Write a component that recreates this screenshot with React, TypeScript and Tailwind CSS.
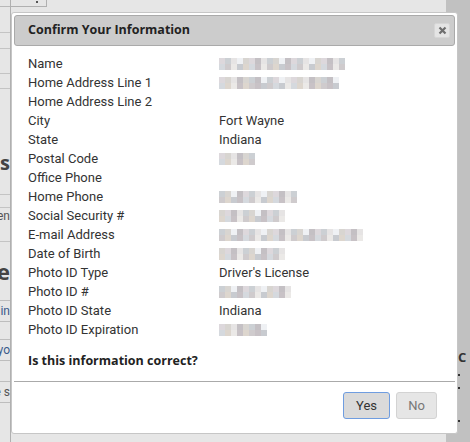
import React from 'react';

const palette = [
  'bg-[#ddd8dc]', 'bg-[#cfcbcd]', 'bg-[#e6e4e4]', 'bg-[#c8cbd0]', 'bg-[#d8d5d1]', 'bg-[#d5d9de]',
  'bg-[#c4c0c4]', 'bg-[#ebe9e7]', 'bg-[#ccd0d4]', 'bg-[#ddd6ce]', 'bg-[#eff1f4]', 'bg-[#c8c2c6]',
];

// pixelated stand-in for the blurred personal values
const Pix = ({ width, seed }: { width: number; seed: number }) => {
  const cols = Math.round(width / 6);
  return (
    <div className="flex flex-col h-[12px] w-fit">
      {[0, 1].map((r) => (
        <div key={r} className="flex h-[6px]">
          {Array.from({ length: cols }).map((_, i) => (
            <div key={i} className={`w-[6px] h-[6px] ${palette[(i * 7 + r * 5 + seed * 3 + ((i * i + seed) % 4)) % palette.length]}`} />
          ))}
        </div>
      ))}
    </div>
  );
};

const rows: { label: string; value?: string; pix?: number }[] = [
  { label: 'Name', pix: 126 },
  { label: 'Home Address Line 1', pix: 120 },
  { label: 'Home Address Line 2' },
  { label: 'City', value: 'Fort Wayne' },
  { label: 'State', value: 'Indiana' },
  { label: 'Postal Code', pix: 36 },
  { label: 'Office Phone' },
  { label: 'Home Phone', pix: 78 },
  { label: 'Social Security #', pix: 66 },
  { label: 'E-mail Address', pix: 144 },
  { label: 'Date of Birth', pix: 66 },
  { label: 'Photo ID Type', value: "Driver's License" },
  { label: 'Photo ID #', pix: 72 },
  { label: 'Photo ID State', value: 'Indiana' },
  { label: 'Photo ID Expiration', pix: 48 },
];

const Clip = ({ children, className = '' }: { children: React.ReactNode; className?: string }) => (
  <div className={`flex justify-end overflow-hidden whitespace-nowrap ${className}`}>{children}</div>
);

export default function App() {
  return (
    <div className="relative w-[470px] h-[442px] overflow-hidden bg-[#e6e6e6] font-['Roboto',sans-serif] text-[13px] text-[#333]">
      {/* page behind the overlay */}
      <div className="flex h-full">
        <div className="w-[11px] shrink-0 border-r border-[#b0b0b0] flex flex-col">
          <div className="h-[7px] border-b border-[#b8b8b8]" />
          <div className="h-[26px] border-b border-[#c4c4c4]" />
          <div className="h-[16px] border-b border-[#c4c4c4]" />
          <div className="h-[25px] border-b border-[#c4c4c4]" />
          <div className="h-[15px] border-b border-[#c4c4c4]" />
          <Clip className="mt-[62px] h-[24px] items-center text-[20px] font-bold text-[#444] font-['Open_Sans',sans-serif]">s</Clip>
          <div className="h-[20px] border-b border-[#c4c4c4]" />
          <div className="h-[13px] border-b border-[#c4c4c4]" />
          <Clip className="h-[16px] items-center text-[12px] text-[#555]">Screen</Clip>
          <div className="h-[18px] border-b border-[#c4c4c4]" />
          <Clip className="mt-[16px] h-[26px] items-center text-[22px] font-bold text-[#444] font-['Open_Sans',sans-serif]">le</Clip>
          <div className="mt-[16px] h-[22px] border-y border-[#bdbdbd] flex justify-end items-center overflow-hidden text-[12px] text-[#3a5a8a] whitespace-nowrap">Onlin</div>
          <div className="mt-[17px] h-[22px] border-y border-[#bdbdbd] flex justify-end items-center overflow-hidden text-[12px] text-[#3a5a8a] whitespace-nowrap">yo</div>
          <div className="mt-[20px] h-[22px] border-y border-[#bdbdbd] flex justify-end items-center overflow-hidden text-[12px] text-[#555] whitespace-nowrap">e s</div>
        </div>
        <div className="flex-1">
          <div className="w-[36px] h-[7px] border-r border-b border-[#b0b0b0] flex justify-center items-start">
            <div className="w-[2px] h-[2px] bg-[#555] mt-[1px] ml-[16px]" />
          </div>
        </div>
        <div className="w-[24px] shrink-0 bg-[#c1c1c1] flex flex-col items-start pl-[12px]">
          <div className="mt-[350px] text-[13px] font-bold text-[#333] font-['Open_Sans',sans-serif] leading-[14px]">C</div>
          <div className="mt-[10px] w-[2px] h-[2px] bg-[#333]" />
          <div className="mt-[11px] w-[2px] h-[2px] bg-[#333]" />
          <div className="mt-[31px] w-[2px] h-[2px] bg-[#333]" />
        </div>
      </div>

      {/* dialog */}
      <div className="absolute left-[11px] top-[12px] w-[447px] h-[422px] bg-white border border-[#c6c6c6] rounded-[3px] flex flex-col p-[2px]">
        <div className="h-[31px] shrink-0 bg-[#cccccc] border border-[#aaaaaa] rounded-[3px] flex items-center justify-between pl-[13px] pr-[4px]">
          <span className="font-['Open_Sans',sans-serif] font-bold text-[12.5px] text-[#222]">Confirm Your Information</span>
          <button className="w-[16px] h-[15px] bg-[#e4e4e4] border border-[#d6d6d6] rounded-[2px] flex items-center justify-center">
            <svg width="9" height="9" viewBox="0 0 9 9">
              <path d="M1.5 1.5 L7.5 7.5 M7.5 1.5 L1.5 7.5" stroke="#6e6e6e" strokeWidth="2.2" />
            </svg>
          </button>
        </div>

        <div className="pl-[14px] pt-[8px] flex flex-col">
          {rows.map((r) => (
            <div key={r.label} className="flex items-center h-[19px]">
              <div className="w-[191px] shrink-0">{r.label}</div>
              {r.value && <div>{r.value}</div>}
              {r.pix && <Pix width={r.pix} seed={r.label.length} />}
            </div>
          ))}
          <div className="mt-[13px] font-['Open_Sans',sans-serif] font-bold text-[12.5px] text-[#222]">Is this information correct?</div>
        </div>

        <div className="mt-auto border-t border-[#aaaaaa] h-[50px] flex items-start justify-end gap-[6px] pt-[10px] pr-[18px]">
          <button className="w-[47px] h-[27px] bg-[#dadada] border border-[#6f9de0] rounded-[3px] text-[13px] text-[#333]">Yes</button>
          <button className="w-[41px] h-[27px] bg-[#e6e6e6] border border-[#d3d3d3] rounded-[3px] text-[13px] text-[#777]">No</button>
        </div>
      </div>
    </div>
  );
}
